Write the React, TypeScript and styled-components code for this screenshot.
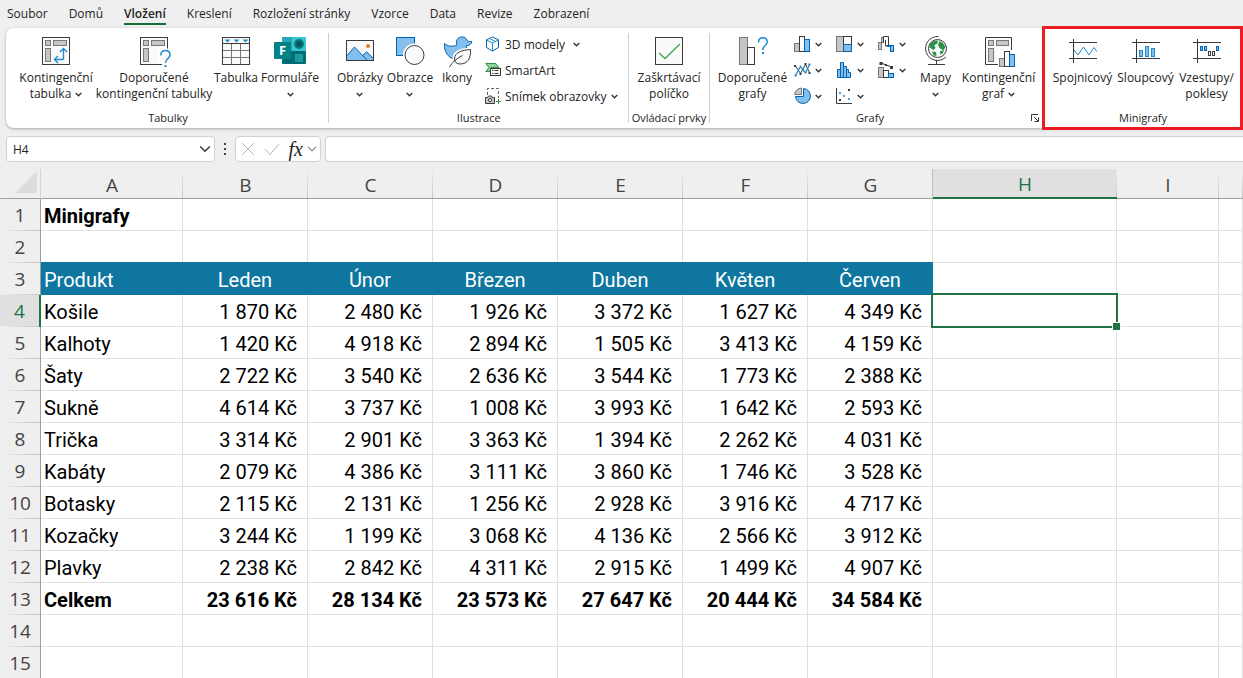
import React from 'react';
import styled, { createGlobalStyle, css } from 'styled-components';

const ink = '#3b3a38';
const grayFill = '#c8c6c4';
const blueFill = '#83beec';
const blueLine = '#0063b1';
const accent = '#1e8bcd';
const green = '#217346';
const teal = '#0e769f';
const gridLine = '#e0e0e0';
const headLine = '#9f9f9f';

const GlobalStyle = createGlobalStyle`
  * { box-sizing: border-box; }
  body {
    margin: 0;
    background: #efefef;
    font-family: "Open Sans", "Noto Sans", sans-serif;
    font-size: 12px;
    color: #242424;
  }
  button, input { font: inherit; color: inherit; }
`;

const Page = styled.div`
  display: flex;
  flex-direction: column;
  min-height: 100vh;
  max-height: 100vh;
  overflow: hidden;
`;

const TabBar = styled.nav`
  display: flex;
  flex: none;
  gap: 21px;
  height: 28px;
  padding: 0 7px;
`;

const Tab = styled.button<{ $active?: boolean }>`
  display: flex;
  flex-direction: column;
  padding: 5px 0 0;
  border: 0;
  background: none;
  line-height: 18px;
  white-space: nowrap;
  font-weight: ${p => (p.$active ? 600 : 400)};
  ${p => p.$active && css`
    &::after {
      content: '';
      align-self: stretch;
      height: 2px;
      background: #0f703b;
    }
  `}
`;

const Ribbon = styled.section`
  display: flex;
  flex: none;
  height: 100px;
  margin-left: 6px;
  background: #fff;
  border-radius: 8px 0 0 8px;
  box-shadow: 0 1px 3px rgba(0, 0, 0, 0.3);
`;

const Group = styled.section<{ $framed?: boolean }>`
  position: relative;
  display: flex;
  flex: none;
  flex-direction: column;
  justify-content: space-between;
  padding: 3px 0 2px;
  & + &::before {
    content: '';
    position: absolute;
    left: 0;
    top: 5px;
    bottom: 5px;
    width: 1px;
    background: #d1d1d1;
  }
  ${p => p.$framed && css`
    &::after {
      content: '';
      position: absolute;
      inset: -2px 0;
      border: 3px solid #ed1c24;
      pointer-events: none;
    }
  `}
`;

const Tools = styled.div<{ $left: number; $right: number }>`
  display: flex;
  padding: 0 ${p => p.$right}px 0 ${p => p.$left}px;
`;

const GroupFooter = styled.div`
  display: flex;
  align-items: center;
  height: 16px;
  padding: 0 1px 0 3px;
`;

const GroupLabel = styled.h2`
  flex: 1;
  margin: 0;
  font-size: 11px;
  line-height: 16px;
  font-weight: 400;
  text-align: center;
  white-space: nowrap;
`;

const Launcher = styled.button`
  display: flex;
  padding: 1px;
  border: 0;
  background: none;
`;

const ToolButton = styled.button<{ $width: number }>`
  display: flex;
  flex: none;
  flex-direction: column;
  align-items: center;
  gap: 3px;
  width: ${p => p.$width}px;
  padding: 4px 0 0;
  border: 0;
  background: none;
  line-height: 16px;
  white-space: nowrap;
`;

const ToolLine = styled.span`
  display: flex;
  align-items: center;
  justify-content: center;
  gap: 4px;
  min-height: 16px;
`;

const SmallGrid = styled.div<{ $left: number; $columns: number }>`
  display: grid;
  grid-template-columns: repeat(${p => p.$columns}, auto);
  grid-template-rows: repeat(3, 26px);
  grid-auto-flow: column;
  column-gap: 14px;
  justify-content: start;
  margin-left: ${p => p.$left}px;
`;

const SmallButton = styled.button<{ $gap: number }>`
  display: flex;
  align-items: center;
  gap: ${p => p.$gap}px;
  padding: 0;
  border: 0;
  background: none;
  white-space: nowrap;
`;

const FormulaBar = styled.div`
  display: flex;
  flex: none;
  height: 41px;
  padding: 8px 0 7px 6px;
`;

const BarBox = styled.div<{ $width: number }>`
  display: flex;
  align-items: center;
  justify-content: space-between;
  flex: none;
  width: ${p => p.$width}px;
  padding: 0 3px 0 5px;
  background: #fff;
  border: 1px solid #d1d1d1;
  border-radius: 4px;
`;

const NameInput = styled.input`
  flex: 1;
  min-width: 0;
  padding: 0 1px;
  border: 0;
  outline: 0;
  background: none;
`;

const IconButton = styled.button`
  display: flex;
  align-items: center;
  gap: 4px;
  padding: 0;
  border: 0;
  background: none;
`;

const Dots = styled.div`
  display: flex;
  flex-direction: column;
  justify-content: center;
  align-items: center;
  gap: 3px;
  width: 20px;
  &::before, &::after, & > i {
    content: '';
    width: 2px;
    height: 2px;
    background: #444;
  }
`;

const FunctionMark = styled.span`
  font: italic 400 20px/20px "Liberation Serif", serif;
  color: #222;
`;

const FormulaInput = styled.input`
  flex: 1;
  min-width: 0;
  margin-left: 4px;
  padding: 0 8px;
  border: 1px solid #d1d1d1;
  border-right: 0;
  border-radius: 4px 0 0 4px;
  background: #fff;
  outline: 0;
`;

const SheetArea = styled.main`
  flex: 1;
  min-height: 0;
  overflow: hidden;
  background: #fff;
`;

const Sheet = styled.table`
  width: 100%;
  table-layout: fixed;
  border-collapse: separate;
  border-spacing: 0;
  font: 20px/31px Roboto, sans-serif;
  color: #000;
`;

const Corner = styled.td`
  height: 30px;
  padding: 0 3px 3px 0;
  background: #efefef;
  border-right: 1px solid #d4d4d4;
  border-bottom: 1px solid ${headLine};
  line-height: 0;
  text-align: right;
`;

const ColumnHead = styled.th<{ $selected?: boolean }>`
  height: 30px;
  padding: 3px 0 0;
  font: 400 19px/26px "Open Sans", sans-serif;
  color: #444;
  background: linear-gradient(#efefef, #c4c4c4) right / 1px 100% no-repeat #efefef;
  border-bottom: 1px solid ${headLine};
  ${p => p.$selected && css`
    color: ${green};
    line-height: 25px;
    background-color: #e0e0e0;
    border-bottom: 2px solid ${green};
    box-shadow: -1px 0 #bdbdbd;
  `}
`;

const RowHead = styled.th<{ $selected?: boolean }>`
  height: 32px;
  padding: 0;
  font: 400 19px/31px "Open Sans", sans-serif;
  color: #444;
  background: linear-gradient(90deg, #efefef, #c4c4c4) bottom / 100% 1px no-repeat #efefef;
  border-right: 1px solid ${headLine};
  ${p => p.$selected && css`
    color: ${green};
    background-color: #e0e0e0;
    border-right: 2px solid ${green};
  `}
`;

const Cell = styled.td<{ $align?: 'left' | 'center' | 'right'; $bold?: boolean; $head?: boolean }>`
  position: relative;
  height: 32px;
  padding: 3px 10px 0 3px;
  border-right: 1px solid ${gridLine};
  border-bottom: 1px solid ${gridLine};
  line-height: 28px;
  white-space: nowrap;
  text-align: ${p => p.$align ?? 'left'};
  font-weight: ${p => (p.$bold ? 700 : 400)};
  ${p => p.$head && css`
    padding-right: ${p.$align === 'center' ? 3 : 10}px;
    color: #fff;
    background: ${teal};
    border-color: ${teal};
    box-shadow: 0 -1px ${teal};
  `}
`;

const Selection = styled.div`
  position: absolute;
  inset: -2px;
  z-index: 1;
  border: 2px solid ${green};
  &::after {
    content: '';
    position: absolute;
    right: -5px;
    bottom: -5px;
    width: 7px;
    height: 7px;
    background: ${green};
    border: 1px solid #fff;
  }
`;

const Svg = ({ w, h = w, children }: { w: number; h?: number; children: React.ReactNode }) => (
  <svg width={w} height={h} viewBox={`0 0 ${w} ${h}`} fill="none" stroke={ink} aria-hidden="true">
    {children}
  </svg>
);

const Chevron = ({ size = 7, color = '#333' }: { size?: number; color?: string }) => (
  <svg width={size} height={size} viewBox="0 0 7 7" fill="none" stroke={color} strokeWidth={size > 7 ? 0.8 : 1.3} aria-hidden="true">
    <path d="M.7 2 3.5 4.8 6.3 2" />
  </svg>
);

const PivotBase = () => (
  <>
    <rect x="2.5" y="2.5" width="27" height="27" fill="#fafafa" />
    <g fill={grayFill} stroke="#797774">
      <rect x="5.5" y="5.5" width="5" height="5" />
      <rect x="13.5" y="5.5" width="13" height="5" />
      <rect x="5.5" y="13.5" width="5" height="13" />
    </g>
  </>
);

const PivotIcon = () => (
  <Svg w={32}>
    <PivotBase />
    <g stroke={accent} strokeWidth="1.4">
      <path d="M23.5 14v9.5q0 1-1 1H14.5" />
      <path d="m20 17 3.500-3.500L27 17M18 21l-3.500 3.500L18 28" />
    </g>
  </Svg>
);

const PivotHelpIcon = () => (
  <Svg w={34} h={32}>
    <g transform="translate(1 0)">
      <PivotBase />
      <path d="M20 12h13v20H20z" fill="#fff" stroke="none" />
      <path d="M19.500 29.500h4.500M29.500 11.500v2" />
      <path d="M22.800 20.500c0-3 1.800-5 4.600-5s4.600 1.800 4.600 4.300c0 3.800-4.500 3.700-4.500 8.200" stroke={accent} strokeWidth="1.5" />
      <path d="M26.500 30h2v2h-2z" fill={accent} stroke="none" />
    </g>
  </Svg>
);

const TableIcon = () => (
  <Svg w={32}>
    <rect x="2.500" y="2.500" width="27" height="27" fill="#fafafa" />
    <path d="M3 8.500h26" />
    <path d="M3 15.500h26M3 22.500h26M11.500 9v20M20.500 9v20" stroke="#797774" />
    <path d="M4.500 4.500h6l-3 3zM13.500 4.500h6l-3 3zM22.500 4.500h6l-3 3z" fill={accent} stroke="none" />
  </Svg>
);

const FormsIcon = () => (
  <Svg w={32}>
    <g stroke="none">
      <rect x="8" y="2" width="24" height="14" rx="1" fill="#37c6d0" />
      <rect x="8" y="2" width="10" height="14" fill="#26a9b5" />
      <path d="M8 16h24v12q0 1-1 1H9q-1 0-1-1z" fill="#036c70" />
      <circle cx="25" cy="9" r="5" fill="#0b7b80" />
      <circle cx="25" cy="9" r="3" fill="#055a5e" />
      <rect x="21" y="19" width="8" height="8" fill="#1a9ba1" />
      <rect x="0" y="7" width="17" height="17" rx="1" fill="#038387" />
    </g>
    <text x="8.500" y="20" textAnchor="middle" fontSize="13" fontWeight="700" fill="#fff" stroke="none">F</text>
  </Svg>
);

const PictureIcon = () => (
  <Svg w={32}>
    <rect x="2.500" y="5.500" width="27" height="20" fill="#fafafa" />
    <path d="m3 20.500 7.500-8.500L23 25H3z" fill={blueFill} stroke="none" />
    <path d="M18.500 20.500 23 16.500l6 6.500v2h-6z" fill={blueFill} stroke="none" />
    <path d="m3 20.500 7.500-8.500L23 25M18.500 20.500l4-3.500 6.500 6" stroke={blueLine} />
    <circle cx="24" cy="11" r="2" fill="#e07b1f" stroke="none" />
    <rect x="2.500" y="5.500" width="27" height="20" />
  </Svg>
);

const ShapesIcon = () => (
  <Svg w={32}>
    <rect x="2.500" y="2.500" width="18" height="18" fill={blueFill} stroke={blueLine} />
    <circle cx="20.500" cy="20" r="11.500" fill="#fff" stroke="none" />
    <circle cx="20.500" cy="20" r="9.500" fill="#fafafa" />
  </Svg>
);

const leaf = 'M29.500 14.500c-9 .500-16 3-16 9.500 0 3 2 5 5.500 5 8 0 11-6 10.500-14.500z';

const DuckIcon = () => (
  <Svg w={32}>
    <path
      d="M3.500 8.500c3 3 8 3.500 12.500 1.500-.500-1-.500-2-.500-3a5.500 5.500 0 0 1 10.700-1.300c1.500 1 3 1 4.700.7-.500 2.600-2.500 4.200-5.500 4.300-.500 1.500.500 3 1.500 5.300l-2 6.500-12 1.500c-6-1.500-10-7.500-9.400-15.500z"
      fill={blueFill}
      stroke={blueLine}
    />
    <path d={leaf} fill="#fff" stroke="#fff" strokeWidth="4" />
    <path d={leaf} fill="#fafafa" />
    <path d="M8.500 32c3-5 7-8.500 13-11.500" />
  </Svg>
);

const CubeIcon = () => (
  <Svg w={16}>
    <path d="m7.500 1 6 2.800v7.700l-6 3.500-6-3.500V3.800z" fill="#fafafa" stroke={blueLine} />
    <path d="m1.500 4 6 3 6-3M7.500 7v8M4.500 2.500l6 3" stroke={accent} />
  </Svg>
);

const SmartArtIcon = () => (
  <Svg w={16}>
    <path d="M.800 1.500h9.700l3.500 4H6v4H.800L4 5.500z" fill="#8ed19b" stroke="#2b9348" />
    <rect x="5.500" y="6.500" width="10" height="7" fill="#fafafa" />
    <path d="M7 8.500h1.500m1 0h4M7 11.500h1.500m1 0h4" />
  </Svg>
);

const ScreenshotIcon = () => (
  <Svg w={16}>
    <path d="M2.500 7V.500h11V10" stroke="#605e5c" strokeDasharray="3 2" />
    <path d="M.500 9.500h2l1-1.500h3l1 1.500h2v6h-9z" fill={grayFill} />
    <circle cx="5" cy="12" r="1.600" fill="#fff" />
    <path d="M13.500 11v5M11 13.500h5" stroke="#2b9348" />
  </Svg>
);

const CheckIcon = () => (
  <Svg w={32}>
    <rect x="2.500" y="2.500" width="27" height="27" fill="#fafafa" />
    <path d="m6 18 6 5.500L27 9" stroke="#3aa655" strokeWidth="1.300" />
  </Svg>
);

const ChartHelpIcon = () => (
  <Svg w={32}>
    <rect x="2.500" y="2.500" width="8" height="27" fill={grayFill} stroke="#797774" />
    <rect x="10.500" y="12.500" width="7" height="17" fill="#fafafa" />
    <path d="M21.500 7.500c0-3 1.600-4.800 4.300-4.800s4.400 1.600 4.400 4.200c0 3.700-4.400 3.600-4.400 8.100" stroke={accent} strokeWidth="1.500" />
    <path d="M25 17h2v2h-2z" fill={accent} stroke="none" />
  </Svg>
);

const ColumnsIcon = () => (
  <Svg w={18}>
    <rect x=".500" y="8.500" width="5" height="8" fill={grayFill} stroke="#797774" />
    <rect x="5.500" y="1.500" width="5" height="15" fill="#fafafa" />
    <rect x="10.500" y="4.500" width="5" height="12" fill={blueFill} stroke={blueLine} />
  </Svg>
);

const LinesIcon = () => (
  <Svg w={18}>
    <path d="m1.500 5 5 7.500 5-9 4 8" />
    <path d="m1.500 14.500 5-9 5 6.500 4-8.500" stroke={accent} strokeWidth="1.300" />
    <path d="M0 4h2v2H0zM5.500 12h2v2h-2zM10.500 2h2v2h-2zM14.500 11h2v2h-2z" fill={ink} stroke="none" />
    <path d="M.500 13.500h2v2h-2zM14.500 2.500h2v2h-2z" fill={accent} stroke="none" />
  </Svg>
);

const PieIcon = () => (
  <Svg w={18}>
    <path d="M9.500 1.500a7.500 7.500 0 1 1-8 8h8z" fill={blueFill} stroke={blueLine} />
    <path d="M7.500 1v6.500H.500A7.500 7.500 0 0 1 7.500 1z" fill={grayFill} stroke="#797774" />
  </Svg>
);

const TreemapIcon = () => (
  <Svg w={18}>
    <rect x=".500" y="1.500" width="7" height="15" fill={grayFill} stroke="#797774" />
    <rect x="7.500" y="1.500" width="8" height="9" fill="#fafafa" />
    <rect x="7.500" y="9.500" width="8" height="7" fill={blueFill} stroke={blueLine} />
  </Svg>
);

const HistogramIcon = () => (
  <Svg w={18}>
    <path d="M1.500 16.500v-8h3v-7h3v4h3v3h2v3h2v5z" fill={blueFill} stroke={blueLine} />
    <path d="M4.500 8v8.500M7.500 5v11.500M10.500 8v8.500" stroke={blueLine} />
  </Svg>
);

const ScatterIcon = () => (
  <Svg w={18}>
    <path d="M.500 1v15.500H16" />
    <path d="M12 2h2v2h-2zM3 12h2v2H3z" fill={ink} stroke="none" />
    <path d="M3 5h2v2H3zM7 8h2v2H7zM12 11h2v2h-2z" fill="#4ba3e0" stroke="none" />
  </Svg>
);

const WaterfallIcon = () => (
  <Svg w={18}>
    <rect x=".500" y="7.500" width="3" height="7" fill={grayFill} stroke="#797774" />
    <rect x="3.500" y="2.500" width="2" height="5" fill={grayFill} stroke="#797774" />
    <path d="M5.500 8V1.500h5V11h-3V5" />
    <rect x="9.500" y="10.500" width="3" height="1" fill={blueFill} stroke={blueLine} />
    <rect x="12.500" y="10.500" width="3" height="6" fill={blueFill} stroke={blueLine} />
  </Svg>
);

const ComboIcon = () => (
  <Svg w={18}>
    <rect x=".500" y="6.500" width="5" height="10" fill={grayFill} stroke="#797774" />
    <rect x="5.500" y="9.500" width="5" height="7" fill="#fafafa" />
    <rect x="10.500" y="12.500" width="5" height="4" fill={blueFill} stroke={blueLine} />
    <path d="m3 2 5 2 6 2" />
    <path d="M1.500 1h3v3h-3zM7 3h2v2H7zM12 5h3v3h-3z" fill={ink} stroke="none" />
  </Svg>
);

const GlobeIcon = () => (
  <Svg w={32}>
    <circle cx="17.500" cy="13.500" r="9" fill="#fafafa" />
    <path d="M10 9q3-4 8-3.500l-.500 3-3 1.500 1 3-2 2-4-2.500zM19.500 6q4 1.500 6 6l-2 3.500-4-2.500-1.500-3zM12 16.500l4 .500.500 4-3-.500zM20 16l4-.500q-1 3.500-3.500 4.500z" fill="#2b9348" stroke="none" />
    <path d="M18.500 1.500A12 12 0 1 0 26 22M16.500 25v4.500M8 29.500h17" />
  </Svg>
);

const PivotChartIcon = () => (
  <Svg w={32}>
    <path d="M2.500 29.500v-27h26v27z" fill="#fafafa" />
    <g fill={grayFill} stroke="#797774">
      <rect x="5.500" y="5.500" width="5" height="5" />
      <rect x="13.500" y="5.500" width="12" height="5" />
      <rect x="5.500" y="13.500" width="5" height="13" />
    </g>
    <path d="M15 15h17v17H15z" fill="#fff" stroke="none" />
    <rect x="16.500" y="23.500" width="5" height="8" fill={grayFill} stroke="#797774" />
    <rect x="21.500" y="16.500" width="5" height="15" fill="#fafafa" />
    <rect x="26.500" y="19.500" width="5" height="12" fill={blueFill} stroke={blueLine} />
  </Svg>
);

const SparkAxes = () => <path d="M2 7.500h28M2 23.500h28M6.500 4v24" />;

const SparkLineIcon = () => (
  <Svg w={32}>
    <SparkAxes />
    <path d="m7 15 4 5 5.500-8 5.500 8 5-7.500 3 4" stroke={accent} />
  </Svg>
);

const SparkColumnIcon = () => (
  <Svg w={32}>
    <SparkAxes />
    <g fill={blueFill} stroke={accent}>
      <rect x="9.500" y="15.500" width="3" height="6" />
      <rect x="15.500" y="11.500" width="3" height="10" />
      <rect x="21.500" y="13.500" width="3" height="8" />
    </g>
  </Svg>
);

const WinLossIcon = () => (
  <Svg w={32}>
    <SparkAxes />
    <g fill={blueFill} stroke={blueLine}>
      <rect x="9.500" y="11.500" width="2" height="4" />
      <rect x="13.500" y="11.500" width="2" height="4" />
      <rect x="25.500" y="11.500" width="2" height="4" />
    </g>
    <rect x="17.500" y="16.500" width="2" height="4" />
    <rect x="21.500" y="16.500" width="2" height="4" />
  </Svg>
);

type ToolProps = { icon: React.ReactNode; width: number; lines: string[]; menu?: boolean };

const Tool = ({ icon, width, lines, menu }: ToolProps) => (
  <ToolButton type="button" $width={width}>
    {icon}
    <span>
      {lines.map((line, i) => (
        <ToolLine key={i}>
          {line}
          {menu && i === lines.length - 1 && <Chevron />}
        </ToolLine>
      ))}
    </span>
  </ToolButton>
);

const RibbonGroup = ({ label, left, right, framed, launcher, children }: {
  label: string; left: number; right: number; framed?: boolean; launcher?: boolean; children: React.ReactNode;
}) => (
  <Group $framed={framed} aria-label={label}>
    <Tools $left={left} $right={right}>{children}</Tools>
    <GroupFooter>
      <GroupLabel>{label}</GroupLabel>
      {launcher && (
        <Launcher type="button" aria-label="Možnosti grafů">
          <Svg w={10}>
            <path d="M1.500 8V1.500H8M4 4l4.500 4.500M8.500 4.500v4h-4" />
          </Svg>
        </Launcher>
      )}
    </GroupFooter>
  </Group>
);

const tabs = ['Soubor', 'Domů', 'Vložení', 'Kreslení', 'Rozložení stránky', 'Vzorce', 'Data', 'Revize', 'Zobrazení'];

const chartMenus: [string, React.ReactNode][] = [
  ['Sloupcový graf', <ColumnsIcon />],
  ['Spojnicový graf', <LinesIcon />],
  ['Výsečový graf', <PieIcon />],
  ['Hierarchický graf', <TreemapIcon />],
  ['Statistický graf', <HistogramIcon />],
  ['Bodový graf', <ScatterIcon />],
  ['Vodopádový graf', <WaterfallIcon />],
  ['Kombinovaný graf', <ComboIcon />],
];

const columns = ['A', 'B', 'C', 'D', 'E', 'F', 'G', 'H', 'I', ''];
const columnWidths = [142, 125, 125, 125, 125, 125, 125, 184, 102];
const months = ['Leden', 'Únor', 'Březen', 'Duben', 'Květen', 'Červen'];

const products: [string, number[]][] = [
  ['Košile', [1870, 2480, 1926, 3372, 1627, 4349]],
  ['Kalhoty', [1420, 4918, 2894, 1505, 3413, 4159]],
  ['Šaty', [2722, 3540, 2636, 3544, 1773, 2388]],
  ['Sukně', [4614, 3737, 1008, 3993, 1642, 2593]],
  ['Trička', [3314, 2901, 3363, 1394, 2262, 4031]],
  ['Kabáty', [2079, 4386, 3111, 3860, 1746, 3528]],
  ['Botasky', [2115, 2131, 1256, 2928, 3916, 4717]],
  ['Kozačky', [3244, 1199, 3068, 4136, 2566, 3912]],
  ['Plavky', [2238, 2842, 4311, 2915, 1499, 4907]],
  ['Celkem', [23616, 28134, 23573, 27647, 20444, 34584]],
];

const money = (n: number) => `${Math.floor(n / 1000)}\u00a0${String(n % 1000).padStart(3, '0')}\u00a0Kč`;

type RowData = { cells: string[]; bold?: boolean; head?: boolean };

const rows: RowData[] = [
  { cells: ['Minigrafy'], bold: true },
  { cells: [] },
  { cells: ['Produkt', ...months], head: true },
  ...products.map(([name, values]) => ({ cells: [name, ...values.map(money)], bold: name === 'Celkem' })),
  { cells: [] },
  { cells: [] },
];

export default function App() {
  return (
    <Page>
      <GlobalStyle />
      <TabBar>
        {tabs.map(t => (
          <Tab key={t} type="button" $active={t === 'Vložení'}>{t}</Tab>
        ))}
      </TabBar>

      <Ribbon>
        <RibbonGroup label="Tabulky" left={8} right={10}>
          <Tool width={84} icon={<PivotIcon />} lines={['Kontingenční', 'tabulka']} menu />
          <Tool width={112} icon={<PivotHelpIcon />} lines={['Doporučené', 'kontingenční tabulky']} />
          <Tool width={52} icon={<TableIcon />} lines={['Tabulka']} />
          <Tool width={56} icon={<FormsIcon />} lines={['Formuláře', '']} menu />
        </RibbonGroup>

        <RibbonGroup label="Ilustrace" left={7} right={10}>
          <Tool width={50} icon={<PictureIcon />} lines={['Obrázky', '']} menu />
          <Tool width={50} icon={<ShapesIcon />} lines={['Obrazce', '']} menu />
          <Tool width={44} icon={<DuckIcon />} lines={['Ikony']} />
          <SmallGrid $left={6} $columns={1}>
            <SmallButton type="button" $gap={4}><CubeIcon />3D modely<span /><Chevron /></SmallButton>
            <SmallButton type="button" $gap={4}><SmartArtIcon />SmartArt</SmallButton>
            <SmallButton type="button" $gap={4}><ScreenshotIcon />Snímek obrazovky<Chevron /></SmallButton>
          </SmallGrid>
        </RibbonGroup>

        <RibbonGroup label="Ovládací prvky" left={3} right={1}>
          <Tool width={77} icon={<CheckIcon />} lines={['Zaškrtávací', 'políčko']} />
        </RibbonGroup>

        <RibbonGroup label="Grafy" left={10} right={10} launcher>
          <Tool width={68} icon={<ChartHelpIcon />} lines={['Doporučené', 'grafy']} />
          <SmallGrid $left={7} $columns={3}>
            {chartMenus.map(([name, icon]) => (
              <SmallButton key={name} type="button" $gap={3} aria-label={name}>{icon}<Chevron /></SmallButton>
            ))}
          </SmallGrid>
          <Tool width={60} icon={<GlobeIcon />} lines={['Mapy', '']} menu />
          <Tool width={66} icon={<PivotChartIcon />} lines={['Kontingenční', 'graf']} menu />
        </RibbonGroup>

        <RibbonGroup label="Minigrafy" left={9} right={6} framed>
          <Tool width={64} icon={<SparkLineIcon />} lines={['Spojnicový']} />
          <Tool width={62} icon={<SparkColumnIcon />} lines={['Sloupcový']} />
          <Tool width={60} icon={<WinLossIcon />} lines={['Vzestupy/', 'poklesy']} />
        </RibbonGroup>
      </Ribbon>

      <FormulaBar>
        <BarBox $width={209}>
          <NameInput aria-label="Pole názvů" defaultValue="H4" />
          <IconButton type="button" aria-label="Vybrat název"><Chevron size={12} /></IconButton>
        </BarBox>
        <Dots><i /></Dots>
        <BarBox $width={86}>
          <IconButton type="button" aria-label="Zrušit">
            <Svg w={14}><path d="M1 1l12 12M13 1 1 13" stroke="#b5b5b5" /></Svg>
          </IconButton>
          <IconButton type="button" aria-label="Zadat">
            <Svg w={16}><path d="m1 8 5 5.500L15 3" stroke="#b5b5b5" /></Svg>
          </IconButton>
          <IconButton type="button" aria-label="Vložit funkci">
            <FunctionMark>fx</FunctionMark>
            <Chevron size={10} color="#888" />
          </IconButton>
        </BarBox>
        <FormulaInput aria-label="Řádek vzorců" />
      </FormulaBar>

      <SheetArea>
        <Sheet>
          <colgroup>
            <col width={41} />
            {columnWidths.map((w, i) => <col key={i} width={w} />)}
            <col />
          </colgroup>
          <thead>
            <tr>
              <Corner>
                <Svg w={22} h={22}><path d="M22 0v22H0z" fill="#dcdcdc" stroke="none" /></Svg>
              </Corner>
              {columns.map((c, i) => (
                <ColumnHead key={i} scope="col" $selected={c === 'H'}>{c}</ColumnHead>
              ))}
            </tr>
          </thead>
          <tbody>
            {rows.map((row, r) => (
              <tr key={r}>
                <RowHead scope="row" $selected={r === 3}>{r + 1}</RowHead>
                {columns.map((c, i) => (
                  <Cell
                    key={i}
                    $bold={row.bold}
                    $head={row.head && i < 7}
                    $align={i === 0 ? 'left' : row.head ? 'center' : 'right'}
                  >
                    {row.cells[i]}
                    {r === 3 && c === 'H' && <Selection />}
                  </Cell>
                ))}
              </tr>
            ))}
          </tbody>
        </Sheet>
      </SheetArea>
    </Page>
  );
}
